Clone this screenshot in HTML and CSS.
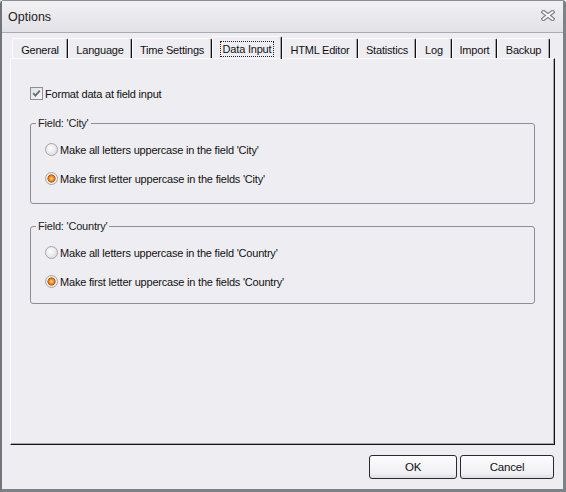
FILE: index.html
```html
<!DOCTYPE html>
<html>
<head>
<meta charset="utf-8">
<link rel="stylesheet" href="styles.css">
</head>
<body>
<div class="window">
  <div class="titlebar">
    <span class="title">Options</span>
    <svg class="close" width="14" height="11" viewBox="0 0 14 11">
      <path d="M2.5 2 L11.5 9 M11.5 2 L2.5 9" stroke="#80838a" stroke-width="4.2" stroke-linecap="square"/>
      <path d="M2.5 2 L11.5 9 M11.5 2 L2.5 9" stroke="#fbfbfc" stroke-width="1.8" stroke-linecap="square"/>
    </svg>
  </div>
  <div class="content">
    <div class="tabs">
      <div class="tab t-general">General</div>
      <div class="tab t-language">Language</div>
      <div class="tab t-time">Time Settings</div>
      <div class="tab tab-active t-data"><span class="focus">Data Input</span></div>
      <div class="tab t-html">HTML Editor</div>
      <div class="tab t-stats">Statistics</div>
      <div class="tab t-log">Log</div>
      <div class="tab t-import">Import</div>
      <div class="tab t-backup">Backup</div>
    </div>
    <div class="panel">
      <label class="check-row">
        <span class="checkbox">
          <svg width="9" height="9" viewBox="0 0 9 9"><path d="M1.2 4.2 L3.4 6.6 L7.8 1.6" fill="none" stroke="#6a6c71" stroke-width="1.8"/></svg>
        </span>
        <span>Format data at field input</span>
      </label>
      <fieldset class="group group-city">
        <legend>Field: 'City'</legend>
        <div class="radio-row"><span class="radio"></span><span>Make all letters uppercase in the field 'City'</span></div>
        <div class="radio-row"><span class="radio radio-on"></span><span>Make first letter uppercase in the fields 'City'</span></div>
      </fieldset>
      <fieldset class="group group-country">
        <legend>Field: 'Country'</legend>
        <div class="radio-row"><span class="radio"></span><span>Make all letters uppercase in the field 'Country'</span></div>
        <div class="radio-row"><span class="radio radio-on"></span><span>Make first letter uppercase in the fields 'Country'</span></div>
      </fieldset>
    </div>
    <div class="buttons">
      <button class="btn btn-ok">OK</button>
      <button class="btn btn-cancel">Cancel</button>
    </div>
  </div>
</div>
</body>
</html>
```

FILE: styles.css
```css
* { box-sizing: border-box; }
html, body {
  margin: 0;
  padding: 0;
  background: #eeedf2;
}
.window {
  width: 566px;
  height: 492px;
  background: #eeedf2;
  border-left: 2px solid #70757c;
  border-right: 3px solid #7d8188;
  border-bottom: 3px solid #7d8188;
  border-top: 1px solid #8a8e94;
  border-top-left-radius: 4px;
  border-top-right-radius: 4px;
  display: flex;
  flex-direction: column;
  font-family: "Liberation Sans", Arial, sans-serif;
  font-size: 11px;
  letter-spacing: -0.2px;
  color: #111;
}
.titlebar {
  height: 32px;
  flex: none;
  display: flex;
  align-items: center;
  justify-content: space-between;
  padding: 1px 8px 0 6px;
  background: linear-gradient(#f1f1f4, #e2e2e7);
  border-bottom: 1px solid #a9abb2;
}
.title {
  font-size: 12.5px;
  letter-spacing: 0;
  color: #222;
}
.close { display: block; margin-top: -3px; }
.content {
  flex: 1;
  display: flex;
  flex-direction: column;
  padding: 3px 0 0 8px;
}
.tabs {
  display: flex;
  align-items: flex-end;
  height: 22px;
  padding-left: 2px;
}
.tab {
  height: 20px;
  padding-top: 5px;
  text-align: center;
  border-top: 1px solid #fbfbfd;
  border-left: 1px solid #fbfbfd;
  border-right: 1px solid #111;
  box-shadow: inset -1px 0 0 #a6a6ac;
  border-top-left-radius: 2px;
  border-top-right-radius: 2px;
}
.tab-active {
  position: relative;
  z-index: 1;
  margin-bottom: -1px;
  height: 23px;
  padding-top: 4px;
}
.focus {
  display: inline-block;
  border: 1px dotted #222;
  padding: 0 2px;
  line-height: 14px;
}
.t-general { width: 56px; }
.t-language { width: 64px; }
.t-time { width: 80px; }
.t-data { width: 70px; }
.t-html { width: 76px; }
.t-stats { width: 58px; }
.t-log { width: 36px; }
.t-import { width: 45px; }
.t-backup { width: 53px; }
.panel {
  width: 545px;
  height: 387px;
  border-top: 1px solid #fbfbfd;
  border-left: 1px solid #fbfbfd;
  border-right: 1px solid #111;
  border-bottom: 1px solid #111;
  box-shadow: inset -1px -1px 0 #a6a6ac;
  padding: 28px 19px 0 19px;
}
.check-row {
  display: flex;
  align-items: center;
  height: 13px;
  gap: 2px;
}
.checkbox {
  width: 13px;
  height: 13px;
  border: 1px solid #8f9096;
  background: linear-gradient(135deg, #e2e2e6, #f7f7f9);
  display: flex;
  align-items: center;
  justify-content: center;
}
.checkbox svg { display: block; }
.group {
  margin: 17px 0 0 0;
  padding: 0 0 0 14px;
  border: 1px solid #8c8d95;
  border-radius: 3px;
  min-width: 0;
}
.group legend {
  padding: 0 2px;
  margin-left: -9px;
  line-height: 13px;
  color: #222;
}
.group-city { height: 87px; padding-top: 5px; }
.group-country { height: 84px; padding-top: 5px; margin-top: 16px; }
.radio-row {
  display: flex;
  align-items: center;
  height: 29px;
  gap: 2px;
}
.radio {
  width: 13px;
  height: 13px;
  border-radius: 50%;
  border: 1px solid #a4a5ab;
  background: radial-gradient(circle at 40% 40%, #ffffff, #e1e1e5 70%, #d2d2d8);
}
.radio-on {
  background: radial-gradient(circle, #ffe08a 0, #f9a33a 1.6px, #e0700f 3px, #b5580c 3.8px, #f4f4f6 4.4px, #e2e2e6 100%);
}
.buttons {
  display: flex;
  justify-content: flex-end;
  gap: 3px;
  padding: 10px 9px 0 0;
}
.btn {
  height: 24px;
  font-family: inherit;
  font-size: 11.5px;
  letter-spacing: -0.2px;
  color: #111;
  border: 1px solid #2a2a2e;
  border-radius: 3px;
  background: linear-gradient(#fdfdfe, #f0f0f3 80%, #dcdce2);
  padding: 0;
}
.btn-ok { width: 88px; }
.btn-cancel { width: 94px; }
```
